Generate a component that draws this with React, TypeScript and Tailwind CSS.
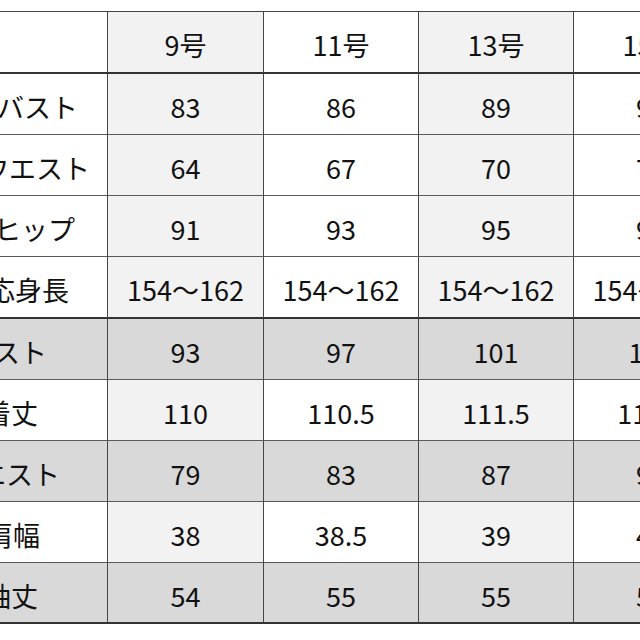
import React from "react";

type Row = {
  label: string;
  pad: string;
  values: string[];
  shaded?: boolean;
  thick?: boolean;
  height: string;
};

const rows: Row[] = [
  { label: "ヌードバスト", pad: "pr-[29px]", values: ["83", "86", "89", "92"], height: "h-[61px]" },
  { label: "ヌードウエスト", pad: "pr-[17px]", values: ["64", "67", "70", "73"], height: "h-[61px]" },
  { label: "ヌードヒップ", pad: "pr-[32px]", values: ["91", "93", "95", "97"], height: "h-[61px]" },
  {
    label: "対応身長",
    pad: "pr-[38px]",
    values: ["154～162", "154～162", "154～162", "154～162"],
    thick: true,
    height: "h-[62px]",
  },
  { label: "バスト", pad: "pr-[60px]", values: ["93", "97", "101", "105"], shaded: true, height: "h-[61px]" },
  { label: "着丈", pad: "pr-[69px]", values: ["110", "110.5", "111.5", "112.5"], height: "h-[61px]" },
  { label: "ウエスト", pad: "pr-[47px]", values: ["79", "83", "87", "91"], shaded: true, height: "h-[61px]" },
  { label: "肩幅", pad: "pr-[67px]", values: ["38", "38.5", "39", "40"], height: "h-[61px]" },
  {
    label: "袖丈",
    pad: "pr-[69px]",
    values: ["54", "55", "55", "56"],
    shaded: true,
    thick: true,
    height: "h-[61px]",
  },
];

const sizes = ["9号", "11号", "13号", "15号"];

// odd size columns (9号, 13号) carry the light tint
const stripe = (i: number) => (i % 2 === 0 ? "bg-[#f2f2f2]" : "bg-white");

function Cell({
  children,
  bg,
  bottom,
  height,
}: {
  children?: React.ReactNode;
  bg: string;
  bottom: string;
  height: string;
}) {
  return (
    <div
      className={`${height} ${bg} ${bottom} flex items-center justify-center border-r border-r-[#454545] pt-[7px] whitespace-nowrap`}
    >
      {children}
    </div>
  );
}

export default function App() {
  return (
    <div className="h-[640px] w-[640px] overflow-hidden bg-white pt-[11px] font-['Noto_Sans_CJK_JP','Liberation_Sans',sans-serif] text-[27px] leading-normal text-[#111]">
      <div className="grid w-[729px] grid-cols-[108px_156px_155px_155px_155px] border-t border-t-[#454545]">
        <Cell bg="bg-white" bottom="border-b-2 border-b-[#333]" height="h-[62px]" />
        {sizes.map((s, i) => (
          <Cell key={s} bg={stripe(i)} bottom="border-b-2 border-b-[#333]" height="h-[62px]">
            {s}
          </Cell>
        ))}

        {rows.map((row) => {
          const bottom = row.thick ? "border-b-2 border-b-[#333]" : "border-b border-b-[#5a5a5a]";
          return (
            <React.Fragment key={row.label}>
              <div
                className={`${row.height} ${bottom} ${row.shaded ? "bg-[#d9d9d9]" : "bg-white"} ${row.pad} flex items-center justify-end overflow-hidden border-r border-r-[#454545] pt-[7px] whitespace-nowrap`}
              >
                <span className="shrink-0">{row.label}</span>
              </div>
              {row.values.map((v, i) => (
                <Cell
                  key={i}
                  bg={row.shaded ? "bg-[#d9d9d9]" : stripe(i)}
                  bottom={bottom}
                  height={row.height}
                >
                  {v}
                </Cell>
              ))}
            </React.Fragment>
          );
        })}
      </div>
    </div>
  );
}
